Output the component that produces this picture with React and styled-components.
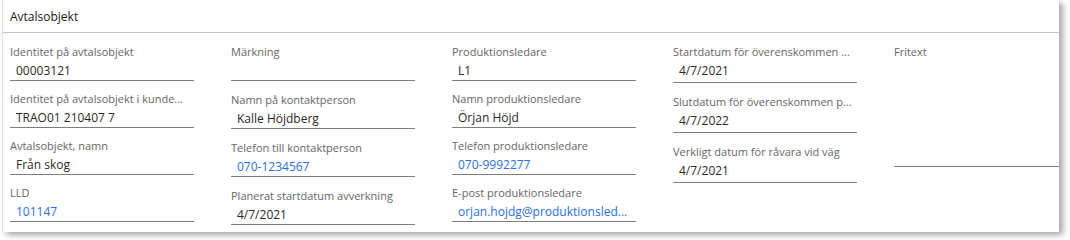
import React from "react";
import styled, { createGlobalStyle } from "styled-components";

const Global = createGlobalStyle`
  html, body { margin: 0; padding: 0; background: #ffffff; }
  body { font-family: "Segoe UI", "Open Sans", "Noto Sans", sans-serif; }
`;

const Page = styled.div`
  width: 1070px;
  height: 240px;
  background: #ffffff;
  padding-left: 2px;
  box-sizing: border-box;
`;

const Card = styled.section`
  width: 1057px;
  height: 232px;
  background: #ffffff;
  border-left: 1px solid #e3e3e3;
  box-sizing: border-box;
  box-shadow: 4px 3px 6px rgba(0, 0, 0, 0.35);
  display: flex;
  flex-direction: column;
`;

const Header = styled.header`
  height: 33px;
  border-bottom: 1px solid #c4c4c4;
  display: flex;
  align-items: center;
  padding-left: 7px;
  padding-top: 1px;
  box-sizing: border-box;
  font-size: 12px;
  color: #1a1a1a;
`;

const Body = styled.div`
  display: grid;
  grid-template-columns: 184px 184px 184px 184px 1fr;
  column-gap: 37px;
  padding: 11px 0 0 7px;
`;

const Column = styled.div`
  display: flex;
  flex-direction: column;
  gap: ${(p) => p.$gap}px;
  padding-top: ${(p) => p.$top || 0}px;
`;

const Field = styled.div`
  display: flex;
  flex-direction: column;
`;

const Label = styled.div`
  font-size: 11px;
  line-height: 16px;
  height: 16px;
  color: #666666;
  white-space: nowrap;
  overflow: hidden;
  text-overflow: ellipsis;
`;

const Value = styled.div`
  height: ${(p) => p.$h || 21}px;
  box-sizing: border-box;
  border-bottom: 1px solid #7d7d7d;
  padding-left: 6px;
  padding-top: 1px;
  font-size: 12px;
  line-height: 20px;
  color: ${(p) => (p.$link ? "#2a6fd9" : "#2a2a2a")};
  white-space: nowrap;
  overflow: hidden;
  text-overflow: ellipsis;
`;

const columns = [
  {
    gap: 10,
    top: 0,
    fields: [
      { label: "Identitet på avtalsobjekt", value: "00003121" },
      { label: "Identitet på avtalsobjekt i kunde...", value: "TRAO01 210407 7" },
      { label: "Avtalsobjekt, namn", value: "Från skog" },
      { label: "LLD", value: "101147", link: true },
    ],
  },
  {
    gap: 11,
    top: 0,
    fields: [
      { label: "Märkning", value: "" },
      { label: "Namn på kontaktperson", value: "Kalle Höjdberg" },
      { label: "Telefon till kontaktperson", value: "070-1234567", link: true },
      { label: "Planerat startdatum avverkning", value: "4/7/2021" },
    ],
  },
  {
    gap: 10,
    top: 0,
    fields: [
      { label: "Produktionsledare", value: "L1" },
      { label: "Namn produktionsledare", value: "Örjan Höjd" },
      { label: "Telefon produktionsledare", value: "070-9992277", link: true },
      { label: "E-post produktionsledare", value: "orjan.hojdg@produktionsled...", link: true },
    ],
  },
  {
    gap: 11,
    top: 0,
    fields: [
      { label: "Startdatum för överenskommen ...", value: "4/7/2021", h: 23 },
      { label: "Slutdatum för överenskommen p...", value: "4/7/2022", h: 23 },
      { label: "Verkligt datum för råvara vid väg", value: "4/7/2021", h: 23 },
    ],
  },
  {
    gap: 0,
    top: 0,
    fields: [{ label: "Fritext", value: "", h: 107 }],
  },
];

export default function App() {
  return (
    <Page>
      <Global />
      <Card>
        <Header>Avtalsobjekt</Header>
        <Body>
          {columns.map((col, i) => (
            <Column key={i} $gap={col.gap} $top={col.top}>
              {col.fields.map((f) => (
                <Field key={f.label}>
                  <Label>{f.label}</Label>
                  <Value $link={f.link} $h={f.h}>
                    {f.value}
                  </Value>
                </Field>
              ))}
            </Column>
          ))}
        </Body>
      </Card>
    </Page>
  );
}
